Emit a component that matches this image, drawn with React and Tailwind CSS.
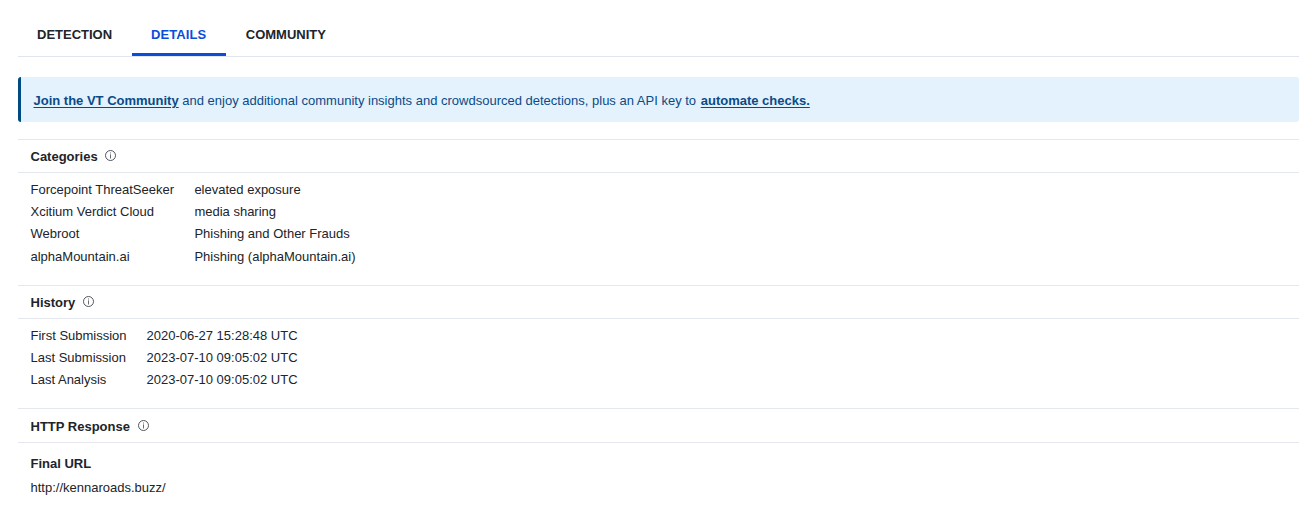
const Info = () => (
  <svg className="mb-px ml-[7.75px] size-[11px]" viewBox="0 0 11 11" fill="none" stroke="#41454c">
    <circle cx="5.5" cy="5.5" r="5" strokeWidth="0.9" />
    <path d="M5.5 4.4V8.5M5.5 2.5V3.5" strokeWidth="0.8" />
  </svg>
);

const Section = ({ title, height, headHeight = 'h-[34px]', children }) => (
  <section className={height}>
    <h2 className={`flex ${headHeight} items-center border-y border-[#e4e7ed] pl-[12.5px] font-bold`}>
      <span className="pt-0.5">{title}</span>
      <Info />
    </h2>
    {children}
  </section>
);

const Rows = ({ rows, cols }) => (
  <dl className={`grid ${cols} auto-rows-[22.25px] pt-[5.75px] pl-[12.5px] leading-[22.25px]`}>
    {rows.map(([k, v]) => (
      <div key={k} className="contents">
        <dt>{k}</dt>
        <dd>{v}</dd>
      </div>
    ))}
  </dl>
);

export default function App() {
  return (
    <main className="h-[505px] overflow-hidden bg-white pr-3 pl-[18px] font-['Liberation_Sans',Arial,sans-serif] text-[13px] text-[#20242b]">
      <nav className="flex h-[57px] border-b border-[#e0e6f0] pt-[13px] font-bold">
        <a className="h-[43px] w-[114px] pt-3 pl-[19px] leading-[19px]">DETECTION</a>
        <a className="h-[43px] w-[94px] border-b-3 border-[#0b4dda] pt-3 pl-[19px] leading-[19px] tracking-[0.1px] text-[#0b4dda]">DETAILS</a>
        <a className="h-[43px] pt-3 pl-[19.75px] leading-[19px]">COMMUNITY</a>
      </nav>
      <div className="mt-5 mb-[17px] flex h-[45px] items-center rounded-[3px] border-l-3 border-[#004a84] bg-[#e3f2fd] pl-[12.5px] text-[#0b4a87]">
        <p className="pt-0.5">
          <a className="font-bold underline underline-offset-2">Join the VT Community</a> and enjoy additional community insights and crowdsourced detections, plus an API key to{' '}
          <a className="ml-px font-bold underline underline-offset-2">automate checks.</a>
        </p>
      </div>
      <Section title="Categories" height="h-[146px]">
        <Rows cols="grid-cols-[163.9px_1fr]" rows={[
          ['Forcepoint ThreatSeeker', 'elevated exposure'],
          ['Xcitium Verdict Cloud', 'media sharing'],
          ['Webroot', 'Phishing and Other Frauds'],
          ['alphaMountain.ai', 'Phishing (alphaMountain.ai)'],
        ]} />
      </Section>
      <Section title="History" height="h-[123px]">
        <Rows cols="grid-cols-[116px_1fr]" rows={[
          ['First Submission', '2020-06-27 15:28:48 UTC'],
          ['Last Submission', '2023-07-10 09:05:02 UTC'],
          ['Last Analysis', '2023-07-10 09:05:02 UTC'],
        ]} />
      </Section>
      <Section title="HTTP Response" height="h-[97px]" headHeight="h-[35px]">
        <div className="pt-[9px] pl-[12.5px]">
          <h3 className="leading-[24px] font-bold">Final URL</h3>
          <p className="leading-[24px]">http://kennaroads.buzz/</p>
        </div>
      </Section>
    </main>
  );
}
